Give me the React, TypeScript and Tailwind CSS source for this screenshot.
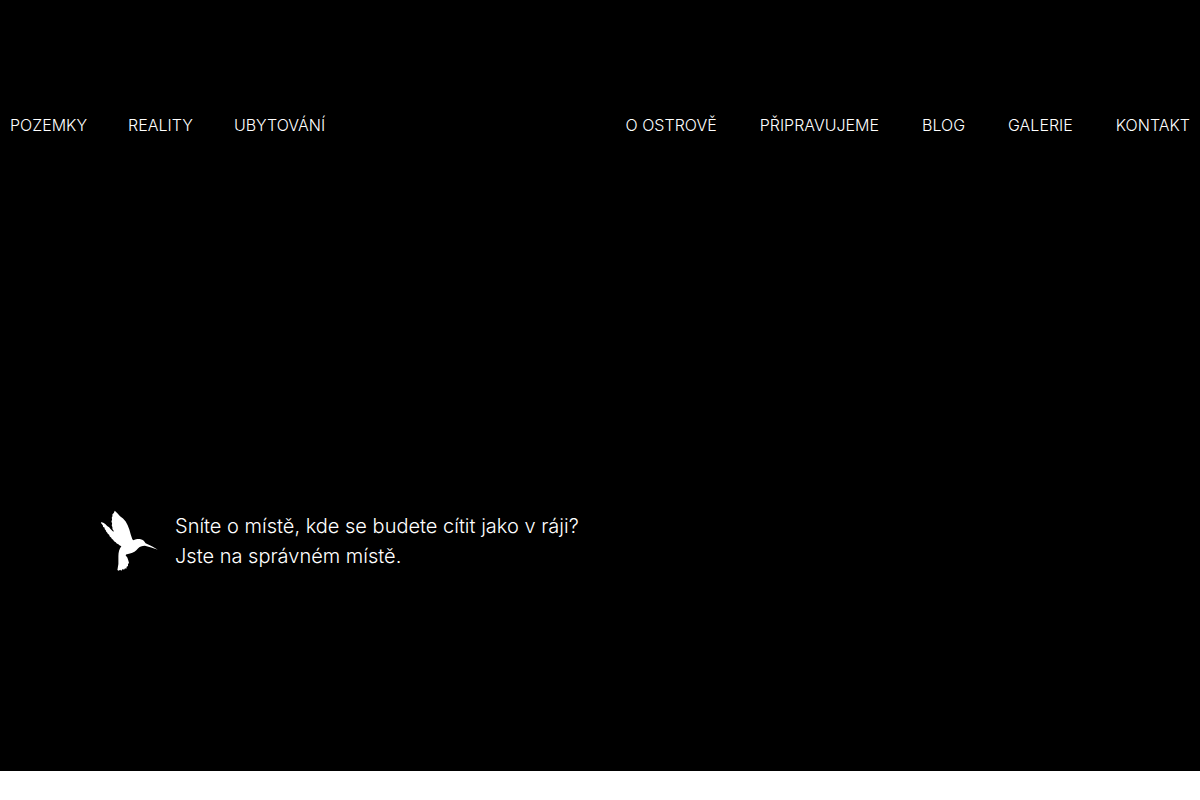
import React from "react";

type NavItem = {
  label: string;
  href: string;
};

const leftNav: NavItem[] = [
  { label: "Pozemky", href: "#pozemky" },
  { label: "Reality", href: "#reality" },
  { label: "Ubytování", href: "#ubytovani" },
];

const rightNav: NavItem[] = [
  { label: "O ostrově", href: "#o-ostrove" },
  { label: "Připravujeme", href: "#pripravujeme" },
  { label: "Blog", href: "#blog" },
  { label: "Galerie", href: "#galerie" },
  { label: "Kontakt", href: "#kontakt" },
];

function NavList({ items, className }: { items: NavItem[]; className: string }) {
  return (
    <ul className={className}>
      {items.map((item) => (
        <li key={item.href}>
          <a href={item.href} className="text-base font-light uppercase hover:underline">
            {item.label}
          </a>
        </li>
      ))}
    </ul>
  );
}

function Hummingbird() {
  return (
    <svg viewBox="18 18 174 184" className="h-[61px] w-[58px] shrink-0" fill="currentColor" aria-hidden="true">
      <path d="M62 20 L70 28 L78 37 L87 44 L95 53 L101 64 L106 77 L110 91 L115 106 L118 109 C124 107 132 105 140 106 C147 107 151 112 155 118 L174 127 L192 138 L172 131 L153 126 C144 127 137 129 132 134 C126 142 118 147 108 149 L96 152 L95 155 L100 161 L103 170 L105 178 L102 181 L102 187 L98 189 L97 195 L93 194 L90 198 L86 196 L82 201 L78 198 L74 201 L70 199 L73 181 L73 157 C73 144 76 134 82 127 L76 124 L73 121 L68 119 L65 115 L60 112 L57 108 L53 105 L51 101 L47 98 L45 93 L41 90 L39 86 L36 83 L35 79 L32 76 L31 71 L27 69 L26 64 L21 58 L21 54 L29 57 L35 62 L39 66 L45 70 L50 76 L56 82 L60 83 L55 75 L55 70 L53 65 L54 59 L52 53 L54 47 L53 41 L55 37 L55 31 L59 27 Z" />
    </svg>
  );
}

export default function App() {
  return (
    <div className="min-h-screen bg-white font-['Inter',sans-serif] text-white">
      <div className="bg-black">
        <header className="px-2.5 pt-[113px]">
          <nav aria-label="Hlavní menu" className="flex flex-wrap justify-between gap-x-10">
            <NavList items={leftNav} className="flex flex-wrap gap-x-[41px]" />
            <NavList items={rightNav} className="flex flex-wrap gap-x-[43px]" />
          </nav>
        </header>

        <main className="flex items-center gap-[17px] px-[100px] pt-[373px] pb-[200px]">
          <Hummingbird />
          <h1 className="text-xl leading-[30px] font-light">
            Sníte o místě, kde se budete cítit jako v ráji?
            <br />
            Jste na správném místě.
          </h1>
        </main>
      </div>
    </div>
  );
}
